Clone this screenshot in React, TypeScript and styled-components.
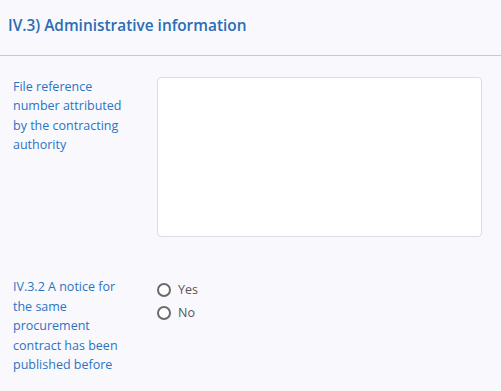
import { createGlobalStyle } from "styled-components";
import styled from "styled-components";

const GlobalStyle = createGlobalStyle`
  html, body {
    margin: 0;
    padding: 0;
    background: #f9f9fd;
    font-family: "Open Sans", "Noto Sans", sans-serif;
  }
`;

const Section = styled.section`
  width: 501px;
  min-height: 391px;
  background: #f9f9fd;
`;

const Header = styled.header`
  height: 56px;
  box-sizing: border-box;
  padding: 0 8px;
  display: flex;
  align-items: center;
  border-bottom: 1px solid #c9c9d1;
`;

const Title = styled.h2`
  margin: 0;
  padding-bottom: 4px;
  font-size: 15.4px;
  font-weight: 600;
  color: #2b6cb4;
`;

const Body = styled.div`
  padding: 21px 19px 0 13px;
  display: flex;
  flex-direction: column;
  gap: 40.5px;
`;

const Row = styled.div`
  display: grid;
  grid-template-columns: 144px 1fr;
  align-items: start;
`;

const Label = styled.label`
  max-width: 118px;
  font-size: 12.5px;
  line-height: 19.5px;
  color: #2a74c4;
  margin-top: -0.5px;
`;

const TextArea = styled.textarea`
  display: block;
  width: 100%;
  height: 160px;
  box-sizing: border-box;
  border: 1px solid #dcdce2;
  border-radius: 4px;
  background: #fff;
  resize: none;
  font: inherit;
  outline: none;
`;

const RadioGroup = styled.div`
  display: flex;
  flex-direction: column;
  gap: 4px;
  padding-top: 2.5px;
`;

const RadioOption = styled.label`
  display: flex;
  align-items: center;
  gap: 7px;
  font-size: 12.5px;
  line-height: 19px;
  color: #555;
`;

const Circle = styled.span`
  width: 14px;
  height: 14px;
  box-sizing: border-box;
  border: 2px solid #6b6b6b;
  border-radius: 50%;
  background: #fff;
`;

export default function App() {
  return (
    <>
      <GlobalStyle />
      <Section>
        <Header>
          <Title>IV.3) Administrative information</Title>
        </Header>
        <Body>
          <Row>
            <Label>File reference number attributed by the contracting authority</Label>
            <TextArea />
          </Row>
          <Row>
            <Label>IV.3.2 A notice for the same procurement contract has been published before</Label>
            <RadioGroup>
              <RadioOption>
                <Circle />
                Yes
              </RadioOption>
              <RadioOption>
                <Circle />
                No
              </RadioOption>
            </RadioGroup>
          </Row>
        </Body>
      </Section>
    </>
  );
}
